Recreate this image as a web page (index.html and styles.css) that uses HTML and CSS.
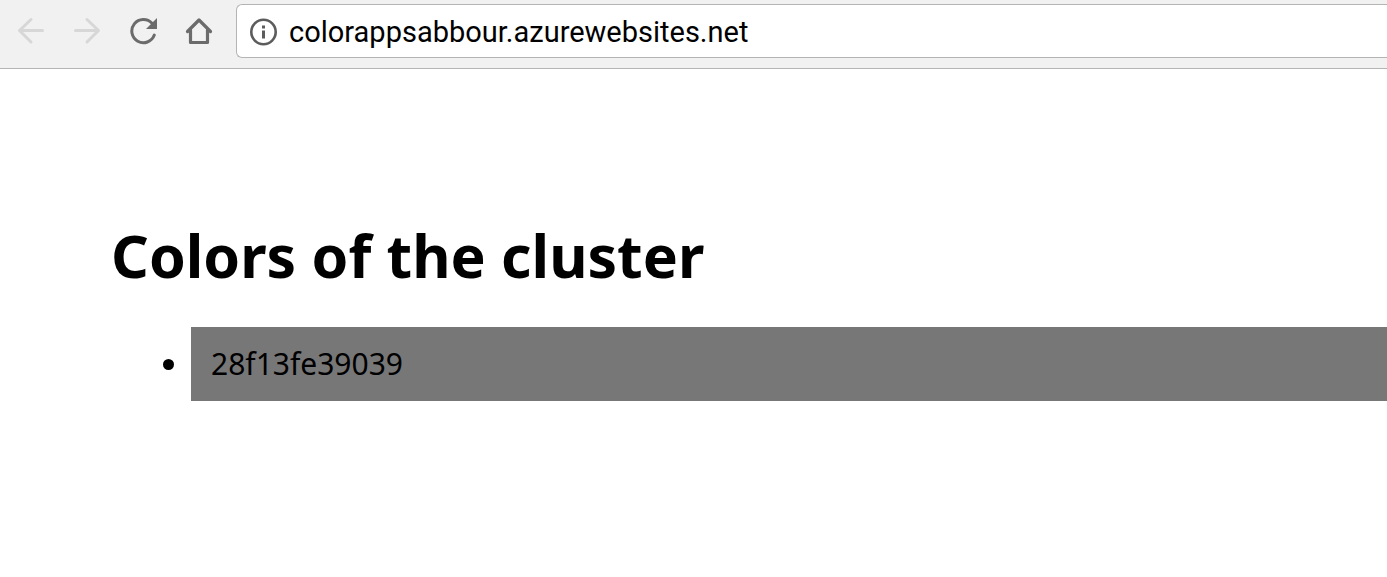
FILE: index.html
```html
<!DOCTYPE html>
<html lang="en">
<head>
<meta charset="utf-8">
<title>Colors of the cluster</title>
<link rel="stylesheet" href="styles.css">
</head>
<body>
<header class="toolbar">
  <nav class="nav-buttons" aria-label="Browser navigation">
    <button class="nav-button" type="button" aria-label="Back" disabled>
      <svg viewBox="0 0 28 28" fill="none" stroke="currentColor" stroke-width="3" stroke-linecap="round" stroke-linejoin="round"><path d="M25.5 13.5H2.5M14 2.5L2.5 13.5L14 25"/></svg>
    </button>
    <button class="nav-button" type="button" aria-label="Forward" disabled>
      <svg viewBox="0 0 28 28" fill="none" stroke="currentColor" stroke-width="3" stroke-linecap="round" stroke-linejoin="round"><path d="M2.5 13.5H25.5M14 2.5L25.5 13.5L14 25"/></svg>
    </button>
    <button class="nav-button" type="button" aria-label="Reload">
      <svg viewBox="0 0 28 28" fill="none" stroke="currentColor" stroke-width="3" stroke-linecap="round"><path d="M25.3 18.1A11.6 11.6 0 1 1 23 6.3"/><path d="M28 1V12H17Z" fill="currentColor" stroke="none"/></svg>
    </button>
    <button class="nav-button" type="button" aria-label="Home">
      <svg viewBox="0 0 28 28" fill="none" stroke="currentColor" stroke-width="3.2" stroke-linecap="round" stroke-linejoin="round"><path d="M2.5 14.5L14 3L25.5 14.5M5.5 13V25.5H22.5V13"/></svg>
    </button>
  </nav>
  <div class="address-bar">
    <svg class="info-icon" viewBox="0 0 28 28" aria-hidden="true"><circle cx="14.5" cy="14" r="12.2" fill="none" stroke="currentColor" stroke-width="2.6"/><path d="M13 7.5h3v3h-3zM13 12.5h3v8h-3z" fill="currentColor"/></svg>
    <input class="address-input" type="text" aria-label="Address" value="colorappsabbour.azurewebsites.net">
  </div>
</header>
<main class="page">
  <h1 class="title">Colors of the cluster</h1>
  <ul class="colors">
    <li class="color">28f13fe39039</li>
  </ul>
</main>
</body>
</html>
```
FILE: styles.css
```css
* {
  box-sizing: border-box;
}

body {
  margin: 0;
  background: #fff;
  color: #000;
  font-family: "Noto Sans", "Open Sans", sans-serif;
  overflow-x: hidden;
}

.toolbar {
  display: flex;
  align-items: center;
  padding: 4px 0 10px 17px;
  background: #f1f1f1;
  border-bottom: 1px solid #b4b4b4;
}

.nav-buttons {
  display: flex;
  gap: 28px;
  margin-right: 23px;
}

.nav-button {
  width: 28px;
  height: 28px;
  padding: 0;
  border: 0;
  background: none;
  color: #6b6b6b;
}

.nav-button:disabled {
  color: #d7d7d7;
}

.nav-button svg {
  display: block;
  width: 28px;
  height: 28px;
}

.address-bar {
  display: flex;
  flex: 1;
  align-items: center;
  gap: 12px;
  height: 54px;
  padding: 1px 0 0 12px;
  background: #fff;
  border: 1px solid #b4b4b4;
  border-right: 0;
  border-radius: 6px 0 0 6px;
}

.info-icon {
  flex: none;
  width: 28px;
  height: 28px;
  color: #5c5c5c;
}

.address-input {
  flex: 1;
  min-width: 0;
  padding: 0;
  border: 0;
  outline: 0;
  background: none;
  color: #000;
  font: 29px/40px Roboto, sans-serif;
}

.page {
  padding: 146px 0 0 111px;
}

.title {
  margin: 0 0 32px;
  font-size: 59px;
  line-height: 80px;
  font-weight: 700;
}

.colors {
  margin: 0;
  padding-left: 80px;
}

.color {
  padding: 20px;
  background: #777;
  font-size: 30px;
  line-height: 34px;
}
```
